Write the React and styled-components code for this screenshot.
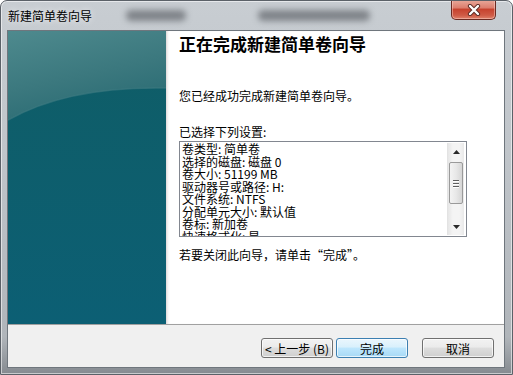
import React from 'react';
import styled, { createGlobalStyle } from 'styled-components';

const GlobalStyle = createGlobalStyle`
    html, body {
        margin: 0;
        padding: 0;
        background: #ffffff;
    }
    body {
        font-family: "Noto Sans CJK SC", "Noto Sans", sans-serif;
    }
`

// window frame
const Window = styled.div`
    position: relative;
    box-sizing: border-box;
    width: 513px;
    height: 375px;
    padding: 0 8px 7px 7px;
    border: 1px solid #5b6168;
    border-radius: 7px 7px 0 0;
    background: linear-gradient(to bottom, #c8cdd2 0%, #c0c5ca 40%, #b0b5ba 90%, #858a90 100%);
    box-shadow: inset 0 0 0 1px rgba(255, 255, 255, 0.55);
    display: flex;
    flex-direction: column;
    overflow: hidden;
`
const TitleBar = styled.div`
    position: relative;
    height: 30px;
    display: flex;
    align-items: center;
    padding-bottom: 1px;
    box-sizing: border-box;
    font-size: 12px;
    color: #000;
`
const TitleText = styled.span`
    position: relative;
    z-index: 1;
    text-shadow: 0 0 6px rgba(255, 255, 255, 0.9);
`
const Smudge = styled.span`
    position: absolute;
    height: 11px;
    border-radius: 5px;
    background: rgba(55, 60, 65, 0.5);
    filter: blur(3px);
`
const CloseBtn = styled.div`
    position: absolute;
    top: -1px;
    right: 8px;
    width: 45px;
    height: 20px;
    box-sizing: border-box;
    border: 1px solid #6b2a22;
    border-top: none;
    border-radius: 0 0 5px 5px;
    background: linear-gradient(to bottom, #e9a99b 0%, #dc7f6f 40%, #c7432f 50%, #cf5a45 80%, #e0816b 100%);
    box-shadow: inset 0 0 0 1px rgba(255, 220, 210, 0.45);
    display: flex;
    align-items: center;
    justify-content: center;
`

// client area
const Client = styled.div`
    flex: 1;
    display: flex;
    flex-direction: column;
    background: #f0f0f0;
    box-shadow: 0 0 0 1px #6f767d;
`
const Body = styled.div`
    height: 293px;
    display: flex;
    background: #ffffff;
`
const Side = styled.div`
    width: 158px;
    flex-shrink: 0;
    line-height: 0;
`
const Content = styled.div`
    flex: 1;
    padding: 3px 0 0 13px;
    box-shadow: inset 3px 0 3px -2px rgba(90, 60, 60, 0.25);
    color: #000;
`
const Heading = styled.h1`
    margin: 0;
    font-size: 17px;
    line-height: 20px;
    font-weight: 700;
`
const Text = styled.p`
    margin: ${p => p.$top || 0}px 0 0 0;
    font-size: 12px;
    line-height: 16px;
`
const ListBox = styled.div`
    margin-top: 1px;
    width: 288px;
    height: 96px;
    box-sizing: border-box;
    border: 1px solid #828790;
    background: #fff;
    display: flex;
    overflow: hidden;
`
const Lines = styled.div`
    flex: 1;
    padding: 1px 2px;
    font-size: 12px;
    line-height: 12.5px;
    white-space: nowrap;
    overflow: hidden;
`
const ScrollBar = styled.div`
    width: 16px;
    margin: 1px 2px 1px 0;
    display: flex;
    flex-direction: column;
    align-items: center;
    background: linear-gradient(to right, #e6e6e6, #f4f4f4 30%, #f4f4f4 70%, #e9e9e9);
    border-left: 1px solid #e3e3e3;
`
const Arrow = styled.div`
    height: 17px;
    width: 100%;
    display: flex;
    align-items: center;
    justify-content: center;
`
const Track = styled.div`
    flex: 1;
    width: 100%;
    padding: 2px 1px 0 1px;
    box-sizing: border-box;
`
const Thumb = styled.div`
    height: 42px;
    box-sizing: border-box;
    border: 1px solid #9a9a9a;
    border-radius: 2px;
    background: linear-gradient(to right, #f3f3f3, #e8e8e8 50%, #d6d6d6);
    display: flex;
    flex-direction: column;
    align-items: center;
    justify-content: center;
    gap: 2px;
`
const Grip = styled.span`
    width: 6px;
    height: 1px;
    background: #5f5f5f;
    box-shadow: 0 1px 0 #ffffff;
`

// buttons
const Footer = styled.div`
    flex: 1;
    border-top: 1px solid #a0a0a0;
    display: flex;
    justify-content: flex-end;
    align-items: flex-start;
    padding: 13px 10px 0 0;
`
const Button = styled.button`
    width: 72px;
    height: 20px;
    margin-left: ${p => p.$gap || 0}px;
    padding: 0;
    box-sizing: border-box;
    border: 1px solid ${p => p.$primary ? '#3c7fb1' : '#707070'};
    border-radius: 3px;
    font-family: "Noto Sans CJK SC", sans-serif;
    font-size: 12px;
    line-height: 17px;
    color: #000;
    background: ${p => p.$primary
        ? 'linear-gradient(to bottom, #eaf6fd 0%, #d9f0fc 45%, #bee6fd 50%, #a7d9f5 100%)'
        : 'linear-gradient(to bottom, #f2f2f2 0%, #ebebeb 45%, #dddddd 50%, #cfcfcf 100%)'};
    box-shadow: inset 0 0 0 1px rgba(255, 255, 255, 0.7);
`

const settings = [
    '卷类型: 简单卷',
    '选择的磁盘: 磁盘 0',
    '卷大小: 51199 MB',
    '驱动器号或路径: H:',
    '文件系统: NTFS',
    '分配单元大小: 默认值',
    '卷标: 新加卷',
    '快速格式化: 是',
];

const SidePicture = () => (
    <svg width="158" height="293" viewBox="0 0 158 293">
        <defs>
            <linearGradient id="low" x1="0" y1="0" x2="0" y2="1">
                <stop offset="0" stopColor="#0f5d66" />
                <stop offset="1" stopColor="#0c5f74" />
            </linearGradient>
            <linearGradient id="high" x1="0" y1="0" x2="0.4" y2="1">
                <stop offset="0" stopColor="#4e8a8e" />
                <stop offset="0.6" stopColor="#3b787e" />
                <stop offset="1" stopColor="#2b6c74" />
            </linearGradient>
        </defs>
        <rect width="158" height="293" fill="url(#low)" />
        <path d="M0,89 Q60,55 158,57 L158,0 L0,0 Z" fill="url(#high)" />
        <path d="M0,89 Q60,55 158,57" fill="none" stroke="#3f7c82" strokeWidth="1.5" opacity="0.6" />
    </svg>
);

const App = () => {
    return (
        <Window>
            <GlobalStyle />
            <TitleBar>
                <Smudge style={{ left: 118, width: 60, top: 9 }} />
                <Smudge style={{ left: 250, width: 112, top: 9 }} />
                <TitleText>新建简单卷向导</TitleText>
                <CloseBtn>
                    <svg width="14" height="12" viewBox="0 0 14 12">
                        <path d="M3,2 L11,10 M11,2 L3,10" stroke="#5a2a24" strokeWidth="4.2" strokeLinecap="round" />
                        <path d="M3,2 L11,10 M11,2 L3,10" stroke="#ffffff" strokeWidth="2.4" strokeLinecap="round" />
                    </svg>
                </CloseBtn>
            </TitleBar>

            <Client>
                <Body>
                    <Side><SidePicture /></Side>
                    <Content>
                        <Heading>正在完成新建简单卷向导</Heading>
                        <Text $top={34}>您已经成功完成新建简单卷向导。</Text>
                        <Text $top={20}>已选择下列设置:</Text>
                        <ListBox>
                            <Lines>
                                {settings.map((s) => <div key={s}>{s}</div>)}
                            </Lines>
                            <ScrollBar>
                                <Arrow>
                                    <svg width="7" height="4" viewBox="0 0 7 4"><path d="M0,4 L3.5,0 L7,4 Z" fill="#2a2a2a" /></svg>
                                </Arrow>
                                <Track>
                                    <Thumb>
                                        <Grip /><Grip /><Grip />
                                    </Thumb>
                                </Track>
                                <Arrow>
                                    <svg width="7" height="4" viewBox="0 0 7 4"><path d="M0,0 L7,0 L3.5,4 Z" fill="#2a2a2a" /></svg>
                                </Arrow>
                            </ScrollBar>
                        </ListBox>
                        <Text $top={10}>若要关闭此向导，请单击“完成”。</Text>
                    </Content>
                </Body>
                <Footer>
                    <Button>&lt; 上一步 (B)</Button>
                    <Button $primary $gap={3}>完成</Button>
                    <Button $gap={14}>取消</Button>
                </Footer>
            </Client>
        </Window>
    );
}

export default App;
